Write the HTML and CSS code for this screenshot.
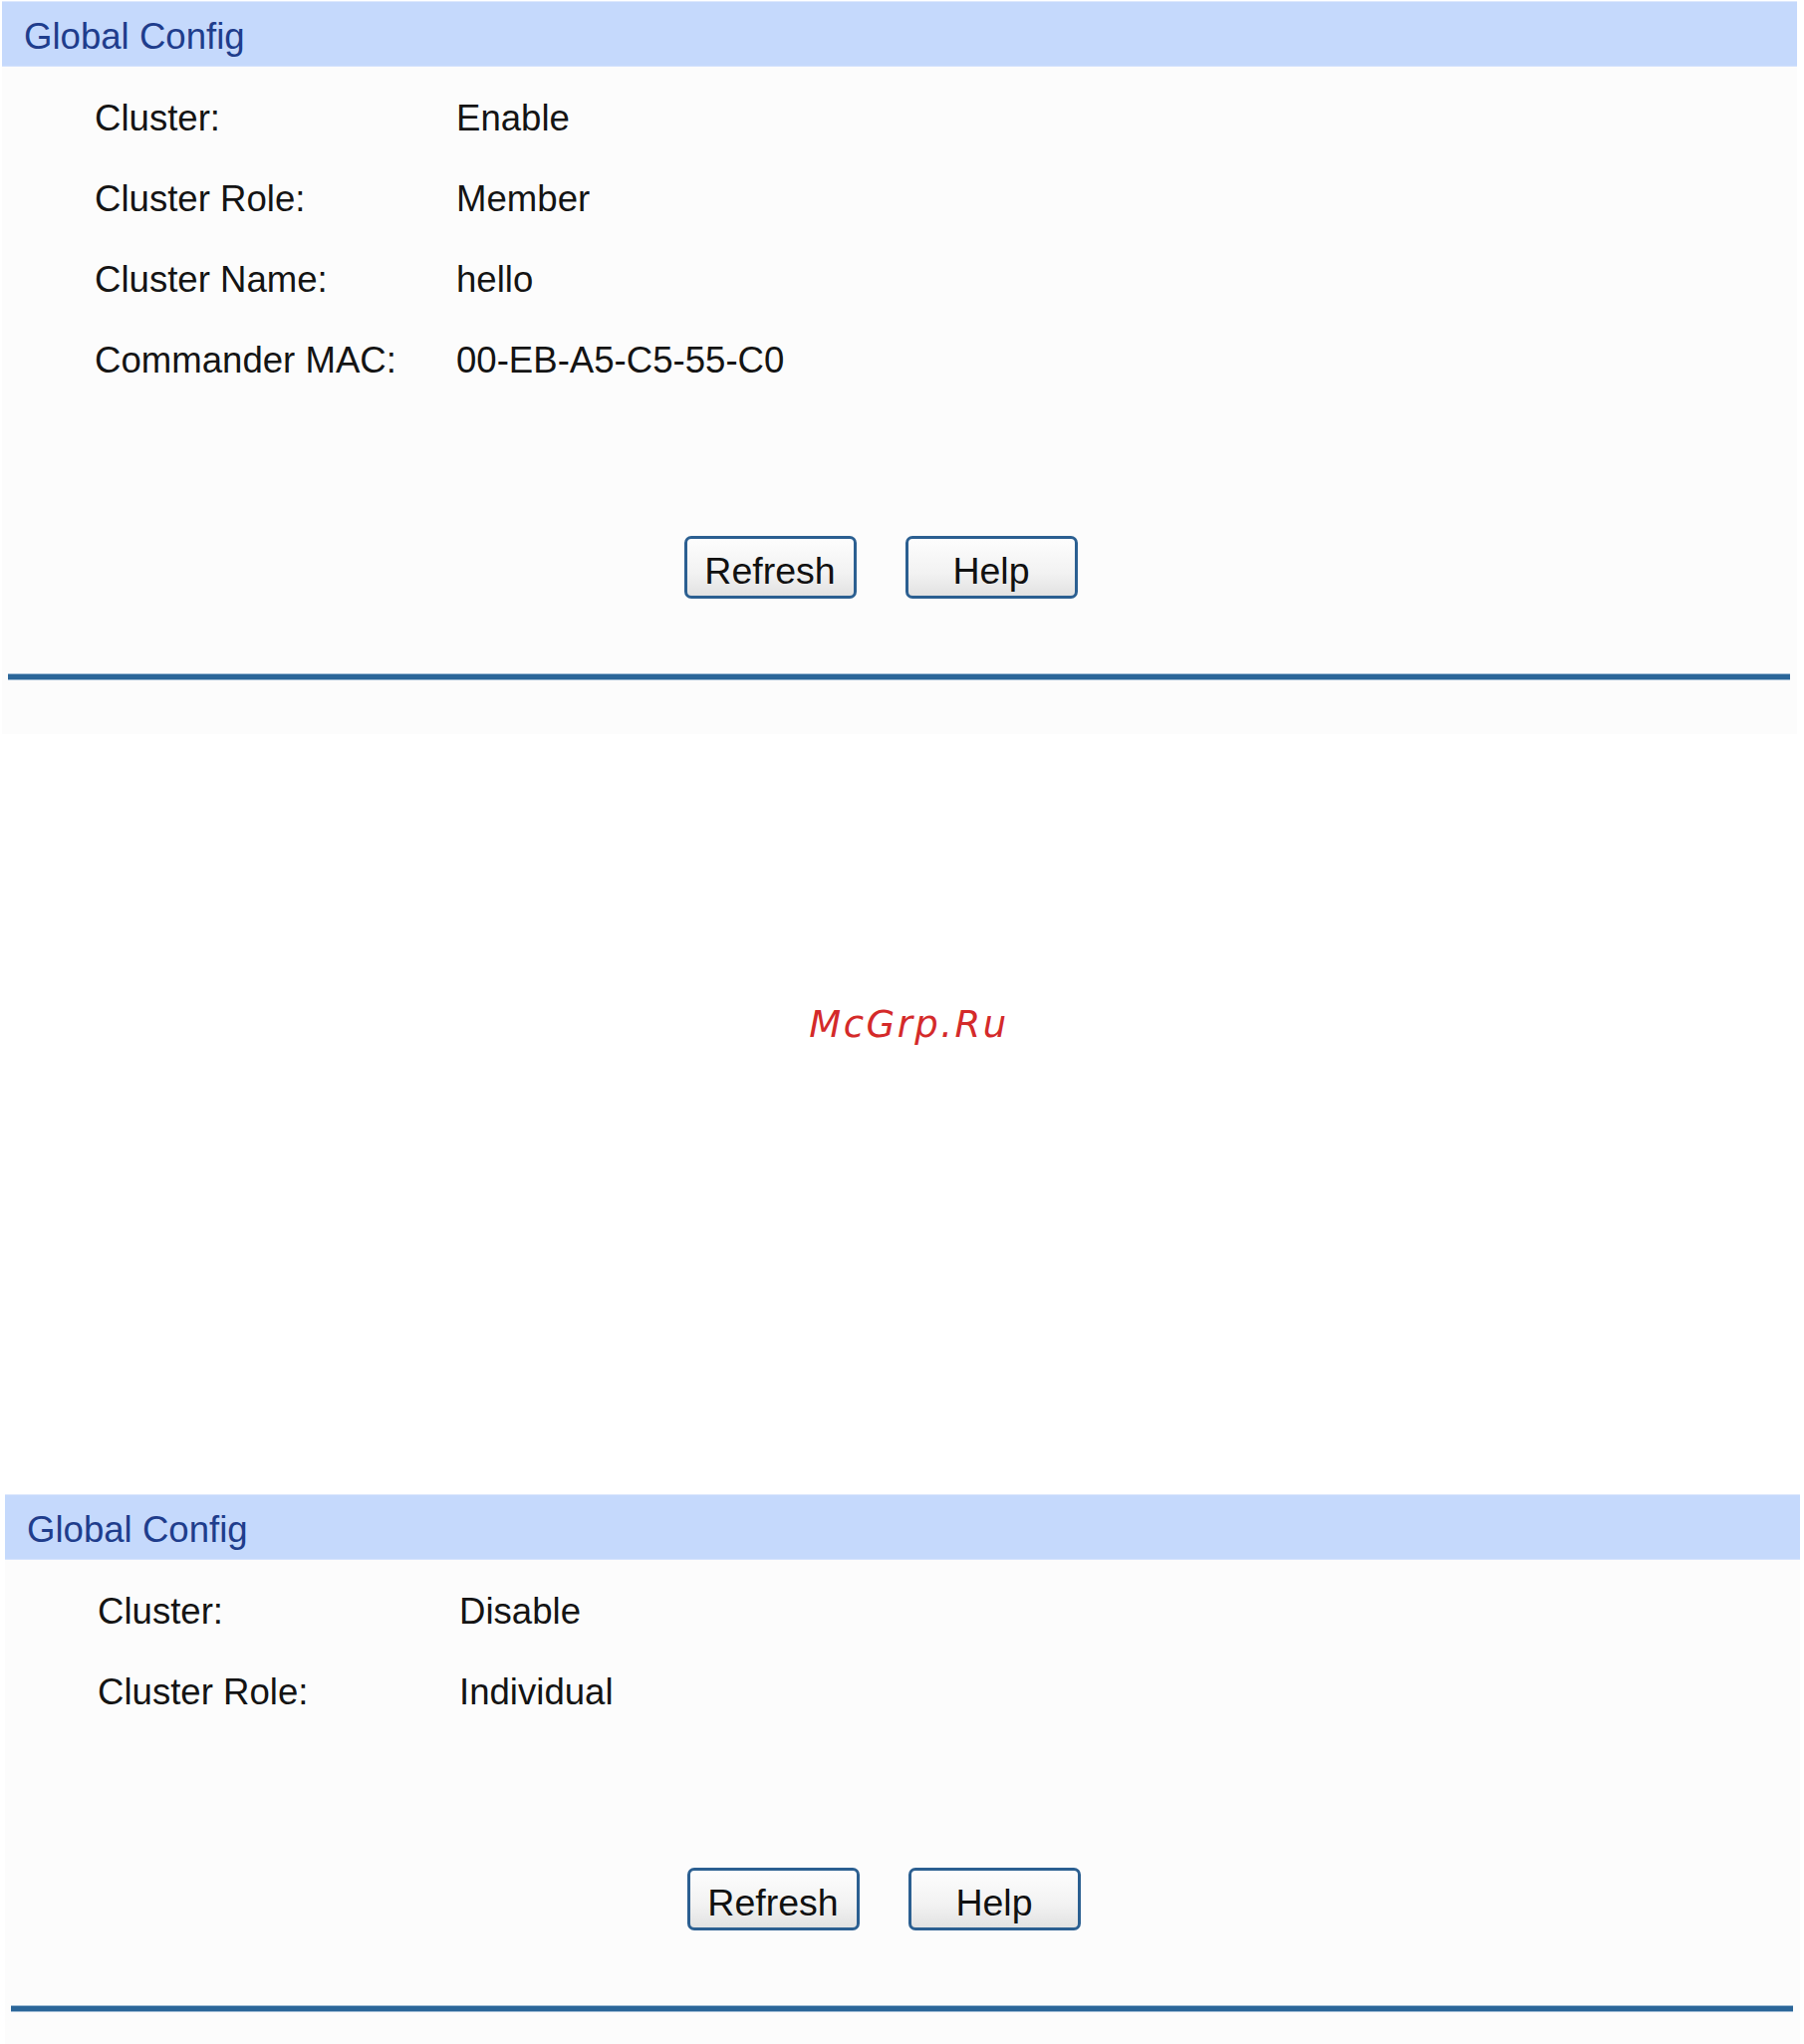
FILE: index.html
```html
<!DOCTYPE html>
<html lang="en">
<head>
    <meta charset="UTF-8">
    <title>Global Config</title>
    <link rel="stylesheet" href="styles.css">
</head>
<body>

    <!-- Cluster enabled, switch is a member -->
    <div class="panel panel-top">
        <div class="panel-title">Global Config</div>
        <table class="info">
            <tr><td class="label">Cluster:</td><td>Enable</td></tr>
            <tr><td class="label">Cluster Role:</td><td>Member</td></tr>
            <tr><td class="label">Cluster Name:</td><td>hello</td></tr>
            <tr><td class="label">Commander MAC:</td><td>00-EB-A5-C5-55-C0</td></tr>
        </table>
        <div class="buttons">
            <button>Refresh</button>
            <button>Help</button>
        </div>
        <div class="rule"></div>
    </div>

    <div class="mark">McGrp.Ru</div>

    <!-- Cluster disabled -->
    <div class="panel panel-bottom">
        <div class="panel-title">Global Config</div>
        <table class="info">
            <tr><td class="label">Cluster:</td><td>Disable</td></tr>
            <tr><td class="label">Cluster Role:</td><td>Individual</td></tr>
        </table>
        <div class="buttons">
            <button>Refresh</button>
            <button>Help</button>
        </div>
        <div class="rule"></div>
    </div>

</body>
</html>
```

FILE: styles.css
```css
body {
    margin: 0;
    background-color: #fff;
    font-family: 'Liberation Sans', Arial, sans-serif;
    color: #141414;
}

.panel {
    width: 1802px;
    background-color: #fcfcfc;
}

.panel-top {
    margin: 1px 0 0 2px;
    padding-bottom: 54px;
}

.panel-bottom {
    margin: 449px 0 0 5px;
    padding-bottom: 36px;
}

/* Title bar */
.panel-title {
    height: 66px;
    line-height: 72px;
    padding-left: 22px;
    background-color: #c5d9fc;
    box-shadow: inset 0 1px 0 #dde8fd, inset 0 -1px 0 #d6e3fd;
    color: #1f3d8c;
    font-size: 36.6px;
}

/* Label / value rows */
.info {
    border-collapse: collapse;
    margin-top: 11px;
    font-size: 36.6px;
}

.info td {
    height: 81px;
    padding: 0;
    vertical-align: middle;
}

.info td.label {
    width: 363px;
    padding-left: 93px;
}

.buttons {
    display: flex;
    justify-content: center;
    gap: 49px;
    margin-top: 136px;
    padding-right: 38px;
}

button {
    width: 173px;
    height: 63px;
    padding: 8px 0 0;
    border: 3px solid #2b5f91;
    border-radius: 7px;
    background: linear-gradient(#fdfdfd, #f2f2f2 60%, #e2e2e2);
    font-family: 'Liberation Sans', Arial, sans-serif;
    font-size: 37.5px;
    color: #111;
    cursor: pointer;
}

button:hover {
    background: linear-gradient(#fff, #e8eef6);
}

.rule {
    height: 5px;
    margin: 75px 7px 0 6px;
    background-color: #2b6699;
    border-top: 1px solid #9dbad4;
    border-bottom: 1px solid #9dbad4;
}

.mark {
    margin-top: 270px;
    padding-left: 14px;
    text-align: center;
    font-family: 'DejaVu Sans', sans-serif;
    font-style: italic;
    font-size: 37px;
    line-height: 44px;
    letter-spacing: 2.5px;
    color: #d42a2a;
}
```
